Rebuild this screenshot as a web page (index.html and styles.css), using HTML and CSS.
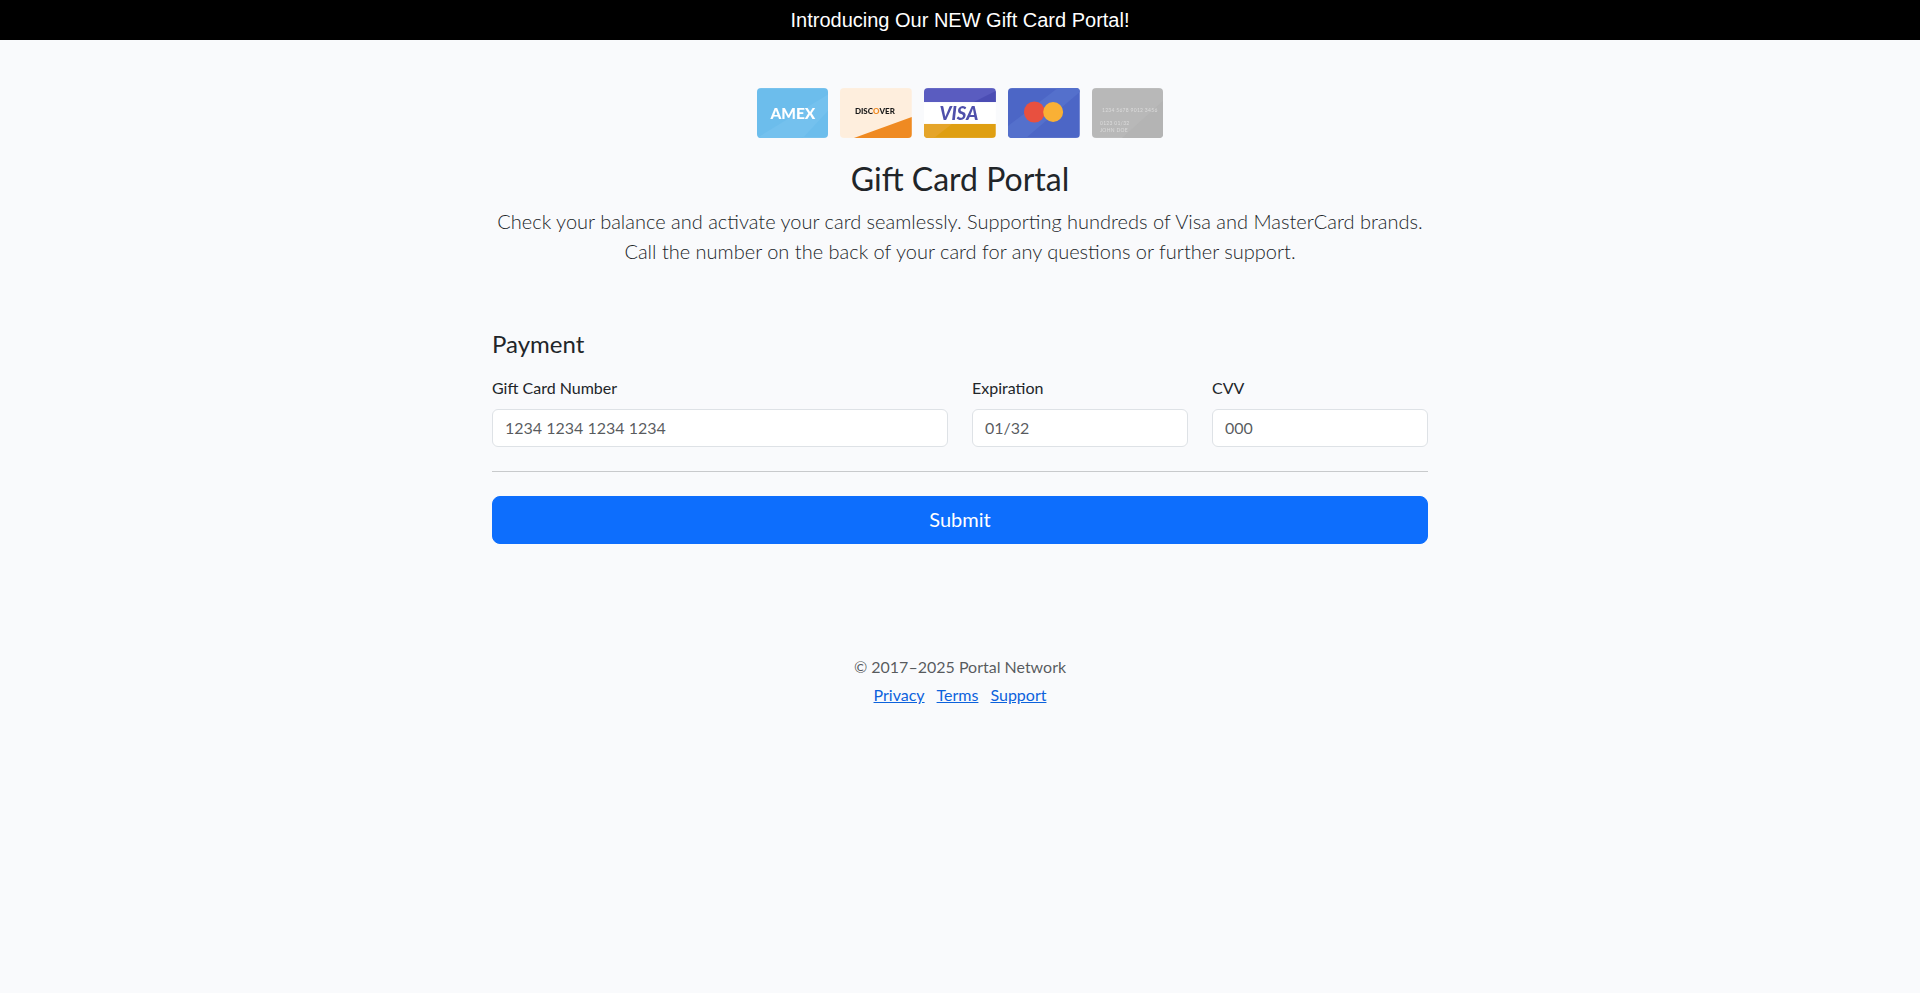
FILE: index.html
```html
<!DOCTYPE html>
<html lang="en">
<head>
  <meta charset="UTF-8" />
  <meta name="viewport" content="width=device-width, initial-scale=1.0"/>
  <title>Gift Card Portal</title>
  <link rel="stylesheet" href="styles.css">
</head>
<body>

  <div class="banner">Introducing Our NEW Gift Card Portal!</div>

  <div class="container">
    <header class="intro">
      <div class="card-logos">
        <!-- Amex -->
        <svg class="card-logo" viewBox="0 0 72 50">
          <rect width="72" height="50" fill="#6cbdec"/>
          <path d="M0 50 L72 6 V22 L46 50 Z" fill="#74c1ee"/>
          <text class="logo-amex" x="36" y="31" text-anchor="middle">AMEX</text>
        </svg>
        <!-- Discover -->
        <svg class="card-logo" viewBox="0 0 72 50">
          <rect width="72" height="50" fill="#feeedd"/>
          <path d="M14 50 L72 29 V50 Z" fill="#ef8a22"/>
          <text class="logo-discover" x="35" y="26" text-anchor="middle">DISC<tspan fill="#ef8a22">O</tspan>VER</text>
        </svg>
        <!-- Visa -->
        <svg class="card-logo" viewBox="0 0 72 50">
          <rect width="72" height="50" fill="#fff"/>
          <rect width="72" height="14" fill="#5a5cc0"/>
          <path d="M50 14 L72 3 V14 Z" fill="#4b4db4"/>
          <rect y="36" width="72" height="14" fill="#df9f12"/>
          <path d="M0 50 V36 H28 L10 50 Z" fill="#e5a52a"/>
          <text class="logo-visa" x="35" y="32" text-anchor="middle">VISA</text>
        </svg>
        <!-- Mastercard -->
        <svg class="card-logo" viewBox="0 0 72 50">
          <rect width="72" height="50" fill="#4c66c6"/>
          <path d="M0 50 V38 L50 0 H72 V4 L18 50 Z" fill="#5470cc"/>
          <circle cx="26.5" cy="24" r="10.5" fill="#e8503f"/>
          <circle cx="45.3" cy="24" r="10" fill="#f9b035"/>
        </svg>
        <!-- Generic -->
        <svg class="card-logo" viewBox="0 0 72 50">
          <rect width="72" height="50" fill="#b8b8b8"/>
          <path d="M30 50 L72 12 V50 Z" fill="#b4b4b4"/>
          <text class="logo-generic" x="10" y="24">1234 5678 9012 3456</text>
          <text class="logo-generic" x="8" y="37">0123 01/32</text>
          <text class="logo-generic" x="8" y="44">JOHN DOE</text>
        </svg>
      </div>
      <h2 class="intro-title">Gift Card Portal</h2>
      <p class="lead">Check your balance and activate your card seamlessly. Supporting hundreds of Visa and MasterCard brands. Call the number on the back of your card for any questions or further support.</p>
    </header>

    <form class="payment">
      <h4 class="payment-title">Payment</h4>
      <div class="fields">
        <div class="field">
          <label for="number">Gift Card Number</label>
          <input id="number" type="text" placeholder="1234 1234 1234 1234">
        </div>
        <div class="field">
          <label for="exp">Expiration</label>
          <input id="exp" type="text" placeholder="01/32">
        </div>
        <div class="field">
          <label for="cvv">CVV</label>
          <input id="cvv" type="text" placeholder="000">
        </div>
      </div>
      <hr class="divider">
      <button class="submit" type="button">Submit</button>
    </form>

    <footer class="footer">
      <p class="copyright">© 2017–2025 Portal Network</p>
      <ul class="footer-links">
        <li><a href="#">Privacy</a></li>
        <li><a href="#">Terms</a></li>
        <li><a href="#">Support</a></li>
      </ul>
    </footer>
  </div>

</body>
</html>
```

FILE: styles.css
```css
* {
  box-sizing: border-box;
}

body {
  font-family: Lato, sans-serif;
  font-size: 16px;
  line-height: 1.5;
  color: #212529;
  background: #f9fafc;
  margin: 0;
}

.banner {
  background: #000;
  color: #fff;
  font-family: "Liberation Sans", sans-serif;
  font-size: 20px;
  line-height: 40px;
  height: 40px;
  text-align: center;
}

.container {
  width: 960px;
  margin: 0 auto;
  padding: 0 12px;
}

.intro {
  padding-top: 48px;
  text-align: center;
}

.card-logos {
  display: flex;
  justify-content: center;
  gap: 12px;
  height: 50px;
  margin-bottom: 22px;
}

.card-logo {
  width: 71.75px;
  height: 50px;
  border-radius: 4px;
  filter: blur(0.4px);
}

.logo-amex {
  font: 900 15.5px Lato, sans-serif;
  fill: #fff;
}

.logo-discover {
  font: 900 8px Lato, sans-serif;
  fill: #1a1a1a;
}

.logo-visa {
  font: italic 900 18.5px Lato, sans-serif;
  fill: #4f50ab;
}

.logo-generic {
  font: 400 5px Lato, sans-serif;
  letter-spacing: 0.3px;
  fill: #dcdcdc;
}

.intro-title {
  font-size: 32px;
  font-weight: 400;
  line-height: 1.2;
  margin: 0 0 8px;
}

.lead {
  font-size: 20px;
  font-weight: 300;
  line-height: 30px;
  margin: 0;
}

.payment {
  margin-top: 64px;
}

.payment-title {
  font-size: 24px;
  font-weight: 400;
  line-height: 1.2;
  margin: 0 0 17px;
}

.fields {
  display: grid;
  grid-template-columns: 456px 216px 216px;
  gap: 24px;
}

.field label {
  display: block;
  margin-bottom: 9px;
}

.field input {
  display: block;
  width: 100%;
  height: 38px;
  padding: 5px 12px 7px;
  font: inherit;
  color: #212529;
  background: #fff;
  border: 1px solid #dee2e6;
  border-radius: 6px;
}

.field input::placeholder {
  color: rgba(33, 37, 41, 0.75);
  opacity: 1;
}

.divider {
  border: 0;
  border-top: 1px solid #c8cacc;
  margin: 24px 0;
}

.submit {
  display: block;
  width: 100%;
  height: 48px;
  padding: 0 0 2px;
  font: inherit;
  font-size: 20px;
  color: #fff;
  background: #0d6efd;
  border: 1px solid #0d6efd;
  border-radius: 8px;
  cursor: pointer;
}

.footer {
  margin-top: 63px;
  padding-top: 48px;
  padding-bottom: 48px;
  text-align: center;
}

.copyright {
  color: rgba(33, 37, 41, 0.75);
  margin: 0 0 4px;
}

.footer-links {
  display: flex;
  justify-content: center;
  gap: 12px;
  list-style: none;
  margin: 0;
  padding: 0;
}

.footer-links a {
  color: #0c62dc;
}
```
